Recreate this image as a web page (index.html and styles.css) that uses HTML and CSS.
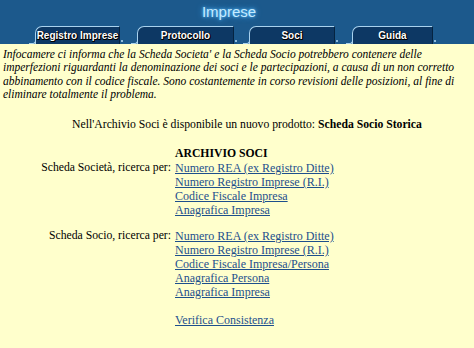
FILE: index.html
```html
<!DOCTYPE html>
<html lang="it">
<head>
  <meta charset="UTF-8" />
  <title>Imprese</title>
  <link rel="stylesheet" href="styles.css">
</head>
<body>
  <div class="header">
    <div class="title">Imprese</div>
    <div class="tabs">
      <a class="tab tab-registro" href="#">Registro Imprese</a>
      <a class="tab tab-protocollo" href="#">Protocollo</a>
      <a class="tab tab-soci" href="#">Soci</a>
      <a class="tab tab-guida" href="#">Guida</a>
    </div>
  </div>

  <p class="notice">Infocamere ci informa che la Scheda Societa' e la Scheda Socio potrebbero contenere delle imperfezioni riguardanti la denominazione dei soci e le partecipazioni, a causa di un non corretto abbinamento con il codice fiscale. Sono costantemente in corso revisioni delle posizioni, al fine di eliminare totalmente il problema.</p>

  <p class="news">Nell'Archivio Soci è disponibile un nuovo prodotto: <b>Scheda Socio Storica</b></p>

  <div class="archivio">
    <div class="label"></div>
    <div class="heading">ARCHIVIO SOCI</div>

    <div class="label">Scheda Società, ricerca per:</div>
    <div class="links">
      <a href="#">Numero REA (ex Registro Ditte)</a>
      <a href="#">Numero Registro Imprese (R.I.)</a>
      <a href="#">Codice Fiscale Impresa</a>
      <a href="#">Anagrafica Impresa</a>
    </div>

    <div class="label group">Scheda Socio, ricerca per:</div>
    <div class="links group">
      <a href="#">Numero REA (ex Registro Ditte)</a>
      <a href="#">Numero Registro Imprese (R.I.)</a>
      <a href="#">Codice Fiscale Impresa/Persona</a>
      <a href="#">Anagrafica Persona</a>
      <a href="#">Anagrafica Impresa</a>
      <a class="spaced" href="#">Verifica Consistenza</a>
    </div>
  </div>
</body>
</html>
```

FILE: styles.css
```css
* {
  box-sizing: border-box;
}
body {
  margin: 0;
  background: #ffffcc;
  color: #000;
  font-family: "Liberation Serif", "Times New Roman", serif;
  font-size: 11.7px;
  line-height: 14px;
}

/* Header */
.header {
  background: #1c598c;
  height: 44px;
  display: flex;
  flex-direction: column;
}
.title {
  height: 26px;
  padding: 3px 16px 0 0;
  text-align: center;
  font-family: "Liberation Sans", Arial, sans-serif;
  font-size: 15px;
  line-height: 18px;
  color: #c4ebff;
  text-shadow: 0 0 3px #5ec2ff, 0 0 6px #3ea6ff;
}
.tabs {
  display: flex;
  height: 18px;
  padding-left: 35px;
}
.tab {
  position: relative;
  height: 18px;
  display: flex;
  justify-content: center;
  padding-top: 3px;
  background: #0d3864;
  border-top: 1px solid #a9d2ee;
  border-left: 1px solid #a9d2ee;
  border-right: 1px solid #052441;
  border-top-left-radius: 7px;
  font-family: "Liberation Sans", Arial, sans-serif;
  font-weight: bold;
  font-size: 10px;
  line-height: 12px;
  color: #fff;
  text-decoration: none;
  text-shadow: 1px 1px 0 #000, 0 1px 0 #000, 1px 0 0 #000;
}
/* little foot at the bottom left */
.tab::before {
  content: "";
  position: absolute;
  left: -7px;
  bottom: 0;
  width: 6px;
  height: 3px;
  border-bottom: 1px solid #a9d2ee;
  border-right: 1px solid #a9d2ee;
  border-bottom-right-radius: 3px;
}
/* light dot at the bottom right */
.tab::after {
  content: "";
  position: absolute;
  right: -4px;
  bottom: 2px;
  width: 2px;
  height: 2px;
  background: #8fbcdc;
}
.tab-registro { width: 85px; margin-right: 17px; }
.tab-protocollo { width: 97px; margin-right: 15px; }
.tab-soci { width: 86px; margin-right: 17px; }
.tab-guida { width: 81px; }

/* Content */
.notice {
  margin: 4px 0 0;
  padding: 0 3px;
  font-style: italic;
  font-size: 11.5px;
  line-height: 13.3px;
}
.news {
  margin: 17px 0 0;
  padding-left: 20px;
  text-align: center;
}
.archivio {
  display: grid;
  grid-template-columns: 171px auto;
  column-gap: 4px;
  margin-top: 14px;
}
.label {
  text-align: right;
}
.heading {
  font-weight: bold;
  line-height: 15px;
}
.links {
  display: flex;
  flex-direction: column;
  align-items: flex-start;
}
.links a {
  color: #1d4f8c;
  font-size: 12px;
}
.group {
  margin-top: 12px;
}
.links .spaced {
  margin-top: 14px;
}
```
